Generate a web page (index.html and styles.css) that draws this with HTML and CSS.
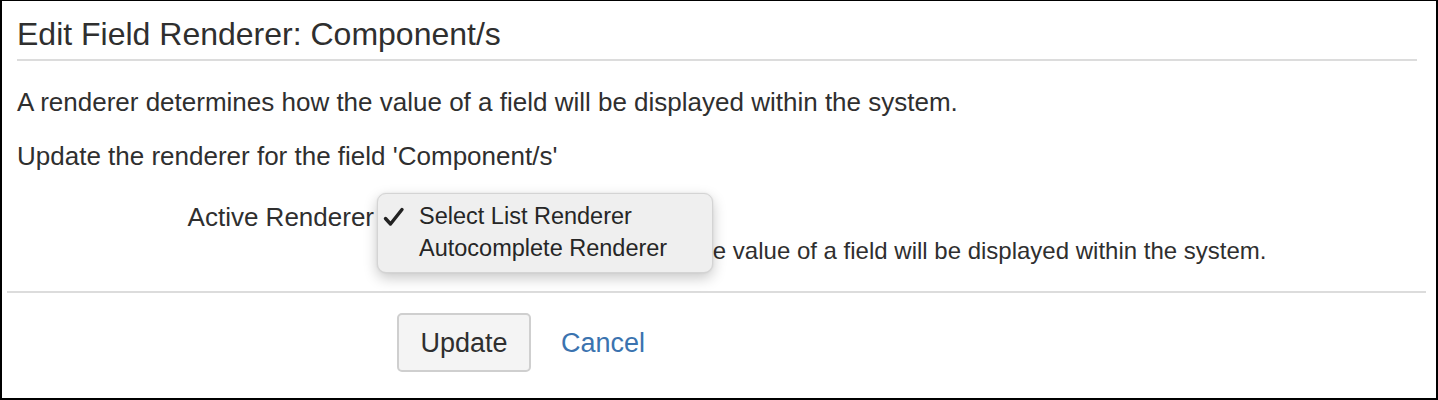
FILE: index.html
```html
<!DOCTYPE html>
<html lang="en">
<head>
<meta charset="utf-8">
<title>Edit Field Renderer: Component/s</title>
<link rel="stylesheet" href="styles.css">
</head>
<body>
<div class="frame">
  <h2 class="title">Edit Field Renderer: Component/s</h2>
  <p class="text first">A renderer determines how the value of a field will be displayed within the system.</p>
  <p class="text">Update the renderer for the field 'Component/s'</p>
  <div class="form-row">
    <label class="label">Active Renderer</label>
    <div class="field">
      <div class="select-wrap">
        <div class="popup">
          <div class="option selected">
            <svg class="check" width="22" height="20" viewBox="0 0 22 20"><path d="M2.5 11.5 L7.5 17 L19 2.5" fill="none" stroke="#222" stroke-width="3.4" stroke-linecap="round" stroke-linejoin="round"/></svg>
            <span>Select List Renderer</span>
          </div>
          <div class="option"><span>Autocomplete Renderer</span></div>
        </div>
      </div>
      <div class="desc"><span class="covered">A renderer determines how th</span>e value of a field will be displayed within the system.</div>
    </div>
  </div>
  <hr class="sep">
  <div class="form-row buttons-row">
    <div></div>
    <div class="buttons">
      <button class="btn" type="button">Update</button>
      <a class="cancel" href="#">Cancel</a>
    </div>
  </div>
</div>
</body>
</html>
```
FILE: styles.css
```css
html, body {
  margin: 0;
  padding: 0;
  background: #fff;
}
body {
  font-family: "Liberation Sans", Arial, Helvetica, sans-serif;
  color: #2f2f2f;
}
.frame {
  width: 1438px;
  height: 400px;
  box-sizing: border-box;
  border-style: solid;
  border-color: #000;
  border-width: 1px 2px 2px 2px;
  overflow: hidden;
}
.title {
  margin: 13px 19px 0 15px;
  padding-bottom: 5px;
  border-bottom: 2px solid #dcdcdc;
  font-size: 32px;
  line-height: 40px;
  font-weight: normal;
  color: #2f2f2f;
}
.text {
  margin: 24px 0 0 15px;
  font-size: 26px;
  line-height: 30px;
}
.text.first {
  margin-top: 26px;
}
.form-row {
  display: grid;
  grid-template-columns: 372px 1fr;
  column-gap: 24px;
  margin-top: 31px;
}
.label {
  text-align: right;
  font-size: 26px;
  line-height: 30px;
}
.field {
  display: flex;
  flex-direction: column;
}
.select-wrap {
  position: relative;
  height: 30px;
}
.popup {
  position: absolute;
  top: -9px;
  left: -21px;
  width: 336px;
  height: 80px;
  box-sizing: border-box;
  padding-top: 6px;
  background: #efefef;
  border: 1px solid #d4d4d4;
  border-radius: 9px;
  box-shadow: 0 5px 14px rgba(0, 0, 0, 0.22), 0 0 2px rgba(0, 0, 0, 0.1);
  z-index: 2;
}
.option {
  position: relative;
  padding-left: 41px;
  font-size: 23.5px;
  line-height: 32px;
  color: #262626;
  white-space: nowrap;
}
.check {
  position: absolute;
  left: 5px;
  top: 7px;
}
.desc {
  margin-top: 5px;
  font-size: 24px;
  line-height: 28px;
  white-space: nowrap;
}
.covered {
  visibility: hidden;
}
.sep {
  margin: 26px 10px 0 5px;
  border: 0;
  height: 2px;
  background: #dcdcdc;
}
.buttons-row {
  margin-top: 20px;
}
.buttons {
  display: flex;
  align-items: center;
  gap: 30px;
  margin-left: -1px;
}
.btn {
  font-family: "Liberation Sans", Arial, Helvetica, sans-serif;
  font-size: 27px;
  line-height: 30px;
  color: #2f2f2f;
  background: #f4f4f4;
  border: 2px solid #cfcfcf;
  border-radius: 5px;
  padding: 12.5px 0;
  height: 59px;
  box-sizing: border-box;
  width: 134px;
  text-align: center;
}
.cancel {
  font-size: 27px;
  line-height: 30px;
  color: #3b73af;
  text-decoration: none;
}
```
